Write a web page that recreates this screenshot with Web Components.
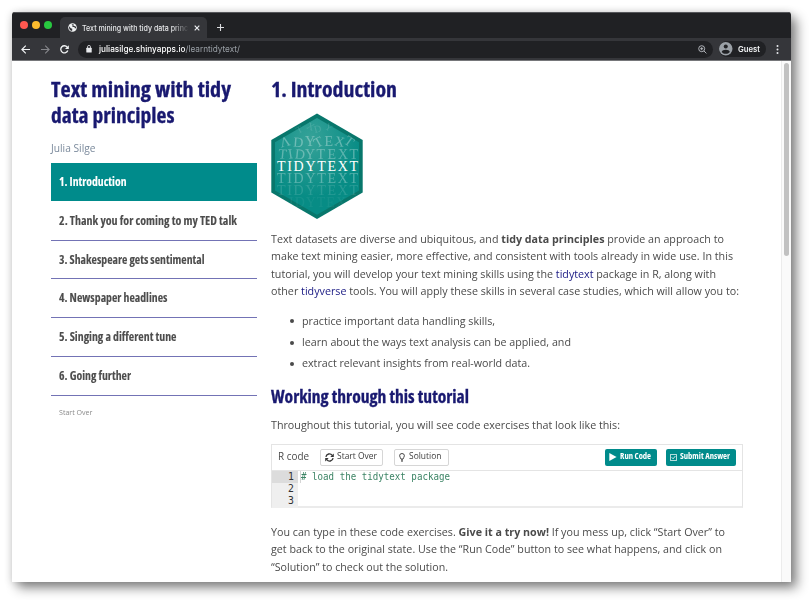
<!DOCTYPE html>
<html lang="en">
<head>
<meta charset="utf-8">
<title>Text mining with tidy data principles</title>
<style>
html,body{margin:0;width:809px;height:600px;overflow:hidden;background:#fff}
body{font-family:"Open Sans","Noto Sans",sans-serif;color:#4a4a4a}
b{font-weight:700}
</style>
</head>
<body>
<browser-window>
  <tab-strip slot="chrome"></tab-strip>
  <address-bar slot="chrome"></address-bar>
  <tutorial-sidebar></tutorial-sidebar>
  <tutorial-content></tutorial-content>
</browser-window>
<script>
const define = (name, html, extra) => customElements.define(name, class extends HTMLElement {
  constructor(){ super(); this.attachShadow({mode:'open'}).innerHTML = html; }
  connectedCallback(){ if (extra) extra(this); }
});

/* A single line of text, set to the given measure. */
define('text-line', `<style>
:host{display:block;white-space:nowrap}
span{display:inline-block;transform-origin:0 50%}
</style><span><slot></slot></span>`, el => {
  const s = el.shadowRoot.querySelector('span');
  requestAnimationFrame(() => {
    const w = s.getBoundingClientRect().width, t = +el.getAttribute('w');
    if (t && w) { s.style.transform = `scaleX(${t / w})`; s.style.marginRight = `${t - w}px`; }
  });
});

define('browser-window', `<style>
:host{display:block;padding:12px 0 0 12px}
.win{box-sizing:border-box;width:779px;height:569.5px;border-radius:3px 3px 0 0;overflow:hidden;display:flex;flex-direction:column;background:#fff}
.shade{width:779px;height:569.5px;border-radius:3px 3px 0 0;box-shadow:6px 6px 12px rgba(0,0,0,.45),0 1px 9px rgba(0,0,0,.17)}
.page{flex:1;min-height:0;display:flex;overflow:hidden}
.rail{box-sizing:border-box;margin-left:auto;width:10px;background:#fafafa;border-left:1px solid #ececec;padding:2px 0 0 2px}
.thumb{width:5px;height:193px;border-radius:3px;background:#c1c1c1}
</style><div class="shade"><div class="win"><slot name="chrome"></slot><div class="page"><slot></slot><div class="rail"><div class="thumb"></div></div></div></div></div>`);

define('tab-strip', `<style>
:host{display:flex;height:26px;background:#202124;align-items:flex-end;box-sizing:border-box;border-top:1px solid #55565a;font-family:Inter,Roboto,sans-serif}
.lights{display:flex;gap:4.2px;padding:0 0 9px 8px}
.lights i{width:8px;height:8px;border-radius:50%}
.tab{display:flex;align-items:center;width:147px;height:21px;margin-left:7.5px;background:#35363a;border-radius:5px 5px 0 0;box-sizing:border-box;padding-left:8px;color:#e6e7e9}
.t{width:107px;margin-left:5.5px;font-size:8px;font-weight:500;line-height:12px;-webkit-mask:linear-gradient(90deg,#000 84%,transparent);mask:linear-gradient(90deg,#000 84%,transparent)}
svg{display:block;flex:none}
.x{margin-left:5px}
.plus{margin:0 0 7px 10px}
</style>
<div class="lights"><i style="background:#ff5850"></i><i style="background:#fdbc2e"></i><i style="background:#28c840"></i></div>
<div class="tab"><svg width="9" height="9" viewBox="0 0 9 9"><circle cx="4.5" cy="4.5" r="4.3" fill="#f1f3f4"/><path d="M1 3.2 2.9 5.2 4.3 5.7 4.1 8C1.8 7.6.8 5.6 1 3.2ZM3.4 1.2 5.8.9 5.2 2.1 4.2 2.6 4.6 3.9 6.4 4 6.8 5.2 8 5.2 8.1 3.8 7 3.3Z" fill="#35363a"/></svg>
<div class="t"><text-line w="106">Text mining with tidy data princ</text-line></div>
<svg class="x" width="6" height="6" viewBox="0 0 6 6"><path d="M.7.7 5.3 5.3M5.3.7.7 5.3" stroke="#e8eaed" stroke-width="1.2"/></svg></div>
<svg class="plus" width="7" height="7" viewBox="0 0 7 7"><path d="M3.5 0V7M0 3.5H7" stroke="#dcdde0" stroke-width="1.1"/></svg>`);

define('address-bar', `<style>
:host{display:flex;height:23px;background:#35363a;box-sizing:border-box;align-items:center;border-bottom:1px solid #76777a;font-family:Inter,Roboto,sans-serif;font-size:8.5px;line-height:12px}
svg{display:block;flex:none}
.nav{display:flex;gap:10.6px;padding-left:9px}
.omni{display:flex;align-items:center;box-sizing:border-box;height:17px;width:635px;margin-left:9px;border-radius:9px;background:#202124;padding-left:8px;color:#9aa0a6}
.omni b{color:#fff;font-weight:500}
.omni text-line{margin-left:7px}
.mag{margin:0 6px 0 auto}
.guest{display:flex;align-items:center;gap:5px;box-sizing:border-box;width:47px;height:15.5px;margin-left:6px;border-radius:8px;background:#202124;color:#f1f3f4;font-weight:600;font-size:8px}
.dots{margin-left:10px}
</style>
<div class="nav">
<svg width="9" height="9" viewBox="0 0 9 9"><path d="M9 4.5H1M4.8.6.9 4.5 4.8 8.4" fill="none" stroke="#f1f3f4" stroke-width="1.2"/></svg>
<svg width="9" height="9" viewBox="0 0 9 9"><path d="M0 4.5H8M4.2.6 8.1 4.5 4.2 8.4" fill="none" stroke="#85868a" stroke-width="1.1"/></svg>
<svg width="9" height="9" viewBox="0 0 9 9"><path d="M7.8 5.5A3.6 3.6 0 1 1 7.2 2.1" fill="none" stroke="#f1f3f4" stroke-width="1.3"/><path d="M8.8.2V4H5Z" fill="#f1f3f4"/></svg>
</div>
<div class="omni"><svg width="6" height="8" viewBox="0 0 6 8"><rect x=".3" y="2.7" width="5.4" height="4.8" rx=".6" fill="#e8eaed"/><path d="M1.5 3V1.9a1.5 1.5 0 0 1 3 0V3" fill="none" stroke="#e8eaed" stroke-width=".8"/></svg>
<text-line w="141"><b>juliasilge.shinyapps.io</b>/learntidytext/</text-line>
<svg class="mag" width="9" height="9" viewBox="0 0 9 9"><circle cx="3.7" cy="3.7" r="3" fill="none" stroke="#bdc1c6" stroke-width=".9"/><path d="M2.2 3.7H5.2M3.7 2.2V5.2M6 6 8.4 8.4" stroke="#bdc1c6" stroke-width=".9"/></svg></div>
<div class="guest"><svg width="13.5" height="13.5" viewBox="0 0 14 14"><circle cx="7" cy="7" r="7" fill="#9aa0a6"/><circle cx="7" cy="4.7" r="2.1" fill="#202124"/><path d="M2.8 10.3C3.2 7.4 10.8 7.4 11.2 10.3 9.2 12.9 4.8 12.9 2.8 10.3Z" fill="#202124"/></svg><text-line w="22">Guest</text-line></div>
<svg class="dots" width="3" height="9" viewBox="0 0 3 9"><g fill="#e8eaed"><circle cx="1.5" cy="1" r="1"/><circle cx="1.5" cy="4.5" r="1"/><circle cx="1.5" cy="8" r="1"/></g></svg>`);

define('nav-item', `<style>
:host{display:flex;align-items:center;box-sizing:border-box;height:38.7px;padding:0 0 2px 7.5px;border-bottom:1px solid #7373b5;font:700 11.8px/16px "Open Sans",sans-serif;font-stretch:75%;color:#4d4d4d;-webkit-text-stroke:.1px}
:host([active]){background:#008b8b;color:#fff;border:0;height:38px;margin-bottom:.8px}
</style><slot></slot>`);

define('tutorial-sidebar', `<style>
:host{display:block;width:206px;margin-left:39px;padding-top:13.8px}
h1{margin:0;font:700 22px/26px "Open Sans",sans-serif;font-stretch:75%;color:#191970;-webkit-text-stroke:.3px}
.by{font-size:10.7px;line-height:16px;color:#7b8a9c;margin:13px 0 7.5px}
.so{font-size:7.2px;line-height:10px;color:#8a8a8a;padding:11px 0 0 7.5px}
</style>
<h1><text-line w="180">Text mining with tidy</text-line><text-line w="123.5">data principles</text-line></h1>
<div class="by"><text-line w="44.5">Julia Silge</text-line></div>
<nav>
<nav-item active><text-line w="67.5">1. Introduction</text-line></nav-item>
<nav-item><text-line w="178">2. Thank you for coming to my TED talk</text-line></nav-item>
<nav-item><text-line w="145.5">3. Shakespeare gets sentimental</text-line></nav-item>
<nav-item><text-line w="108.5">4. Newspaper headlines</text-line></nav-item>
<nav-item><text-line w="117.5">5. Singing a different tune</text-line></nav-item>
<nav-item><text-line w="72">6. Going further</text-line></nav-item>
</nav>
<div class="so"><text-line w="33.5">Start Over</text-line></div>`);

define('hex-logo', `<style>:host{display:block;width:92px;height:107px}svg{display:block}</style>
<svg width="92" height="107" viewBox="0 0 92 107">
<defs><radialGradient id="g" cx=".42" cy=".22" r=".6"><stop offset="0" stop-color="#36a298"/><stop offset="1" stop-color="#078c85"/></radialGradient></defs>
<path d="M46 .5 91.7 27V79.5L46 106 .3 79.5V27Z" fill="#08776c"/>
<path d="M46 5 88 29.2V77.5L46 101.7 4 77.5V29.2Z" fill="url(#g)"/>
<g font-family="Liberation Serif,serif" font-size="14" fill="#fff">
<g opacity=".13" font-size="10"><text x="27" y="20" transform="rotate(-28 29 20)">T</text><text x="35" y="15" transform="rotate(25 35 15)">X</text><text x="44" y="20" transform="rotate(-15 44 20)">D</text><text x="53" y="15" transform="rotate(35 53 15)">Y</text></g>
<g opacity=".32"><text x="9" y="33.5" transform="rotate(-14 14 29)">Λ</text><text x="22" y="33.5" transform="rotate(4 23 34)">D</text><text x="34" y="33">Y</text><text x="43" y="33.5" transform="rotate(-28 48 29)">T</text><text x="53.5" y="33">E</text><text x="63.5" y="33" transform="rotate(12 68 29)">X</text><text x="73.5" y="33" transform="rotate(36 78 29)">T</text></g>
<g opacity=".3"><text x="7.5" y="45.6" transform="rotate(5 12 41)">T</text><text x="17" y="45.6" transform="rotate(-8 18 41)">I</text><text x="24" y="45.6" transform="rotate(6 28 41)">D</text><text x="34" y="45.6">Y</text><text x="45.5" y="45.6">T</text><text x="56.5" y="45.6">E</text><text x="67" y="45.6">X</text><text x="78.5" y="45.6">T</text></g>
<text x="6" y="57.7" textLength="81">TIDYTEXT</text>
<text x="6" y="69.9" textLength="81" opacity=".3">TIDYTEXT</text>
<text x="6" y="82" textLength="81" opacity=".13">TIDYTEXT</text>
<text x="18" y="94" textLength="57" opacity=".05">IDYTEX</text>
</g></svg>`);

define('code-exercise', `<style>
:host{display:block;box-sizing:border-box;width:472px;height:64.5px;border:1px solid #e4e4e4;border-bottom:2px solid #ebebeb}
svg{display:block;flex:none}
.head{display:flex;align-items:center;height:25px;border-bottom:1px solid #e4e4e4;padding:0 6px 0 6px;font-size:10px;line-height:14px}
.head text-line{margin-bottom:2px}
.btn{display:flex;align-items:center;box-sizing:border-box;height:17px;border:1px solid #d6d6d6;border-radius:2px;padding-left:4px;gap:3px;font-size:8.6px;color:#3c3c3c}
.go{height:16.5px;background:#008b8b;border:0;color:#fff;font-weight:700;font-stretch:75%;font-size:8.4px}
.ed{display:grid;grid-template-columns:26px 1fr;font:9.8px/12.2px "DejaVu Sans Mono",monospace;color:#333}
.n{background:#efefef;text-align:right}
.n div{padding-right:4px;height:12.2px}
.n div:first-child{background:#dcdcdc}
.c{color:#3c8465;padding-left:3px}
.c text-line{box-shadow:-.5px 0 0 #aaa;height:12px}
</style>
<div class="head">
<text-line w="31">R code</text-line>
<div class="btn" style="width:63px;margin-left:11px"><svg width="9" height="9" viewBox="0 0 9 9"><path d="M.9 3.8A3.5 3.5 0 0 1 7.2 2.4M8.1 5.2A3.5 3.5 0 0 1 1.8 6.6" fill="none" stroke="#333" stroke-width="1.3"/><path d="M8.8.4V3.9H5.3ZM.2 8.6V5.1H3.7Z" fill="#333"/></svg><text-line w="40">Start Over</text-line></div>
<div class="btn" style="width:55px;margin-left:11px;gap:4px"><svg width="6" height="9" viewBox="0 0 6 9"><path d="M2 6.1C2 4.9.6 4.4.6 2.8a2.4 2.3 0 0 1 4.8 0C5.4 4.4 4 4.9 4 6.1ZM2 7.1H4M2.3 8.3H3.7" fill="none" stroke="#333" stroke-width=".9"/></svg><text-line w="32.5">Solution</text-line></div>
<div class="btn go" style="width:52px;margin-left:auto;"><svg width="8" height="8" viewBox="0 0 8 8"><path d="M.3 0 7.6 4 .3 8Z" fill="#fff"/></svg><text-line w="31">Run Code</text-line></div>
<div class="btn go" style="width:70px;margin-left:9px"><svg width="7" height="7" viewBox="0 0 7 7"><path d="M.4.4H6.6V6.6H.4ZM1.7 3.3 3.1 4.8 5.4 2" fill="none" stroke="#fff" stroke-width=".8"/></svg><text-line w="50">Submit Answer</text-line></div>
</div>
<div class="ed"><div class="n"><div>1</div><div>2</div><div>3</div></div><div class="c"><text-line w="149"># load the tidytext package</text-line></div></div>`);

define('tutorial-content', `<style>
:host{display:block;width:473px;margin-left:14px;padding-top:13.8px;font-size:10.8px;line-height:17.2px}
h2,h3{margin:0;font:700 22px/26px "Open Sans",sans-serif;font-stretch:75%;color:#191970;-webkit-text-stroke:.3px}
h3{font-size:17.3px;line-height:22px;margin:12.9px 0 7.8px}
hex-logo{margin:12.2px 0 10.3px}
ul{list-style:none;margin:10.6px 0 0;padding:0}
li{display:flex;align-items:center;height:21.3px}
li::before{content:"";width:4px;height:4px;border-radius:50%;background:#4a4a4a;margin:2px 8px 0 19px}
a{color:#191983}
code-exercise{margin:10.5px 0 14.8px}
</style>
<h2><text-line w="126">1. Introduction</text-line></h2>
<hex-logo></hex-logo>
<text-line w="453">Text datasets are diverse and ubiquitous, and <b>tidy data principles</b> provide an approach to</text-line>
<text-line w="462">make text mining easier, more effective, and consistent with tools already in wide use. In this</text-line>
<text-line w="445">tutorial, you will develop your text mining skills using the <a>tidytext</a> package in R, along with</text-line>
<text-line w="468">other <a>tidyverse</a> tools. You will apply these skills in several case studies, which will allow you to:</text-line>
<ul><li><text-line w="193">practice important data handling skills,</text-line></li>
<li><text-line w="269">learn about the ways text analysis can be applied, and</text-line></li>
<li><text-line w="228">extract relevant insights from real-world data.</text-line></li></ul>
<h3><text-line w="198">Working through this tutorial</text-line></h3>
<text-line w="349">Throughout this tutorial, you will see code exercises that look like this:</text-line>
<code-exercise></code-exercise>
<text-line w="454">You can type in these code exercises. <b>Give it a try now!</b> If you mess up, click “Start Over” to</text-line>
<text-line w="451">get back to the original state. Use the “Run Code” button to see what happens, and click on</text-line>
<text-line w="177">“Solution” to check out the solution.</text-line>`);
</script>
</body>
</html>
